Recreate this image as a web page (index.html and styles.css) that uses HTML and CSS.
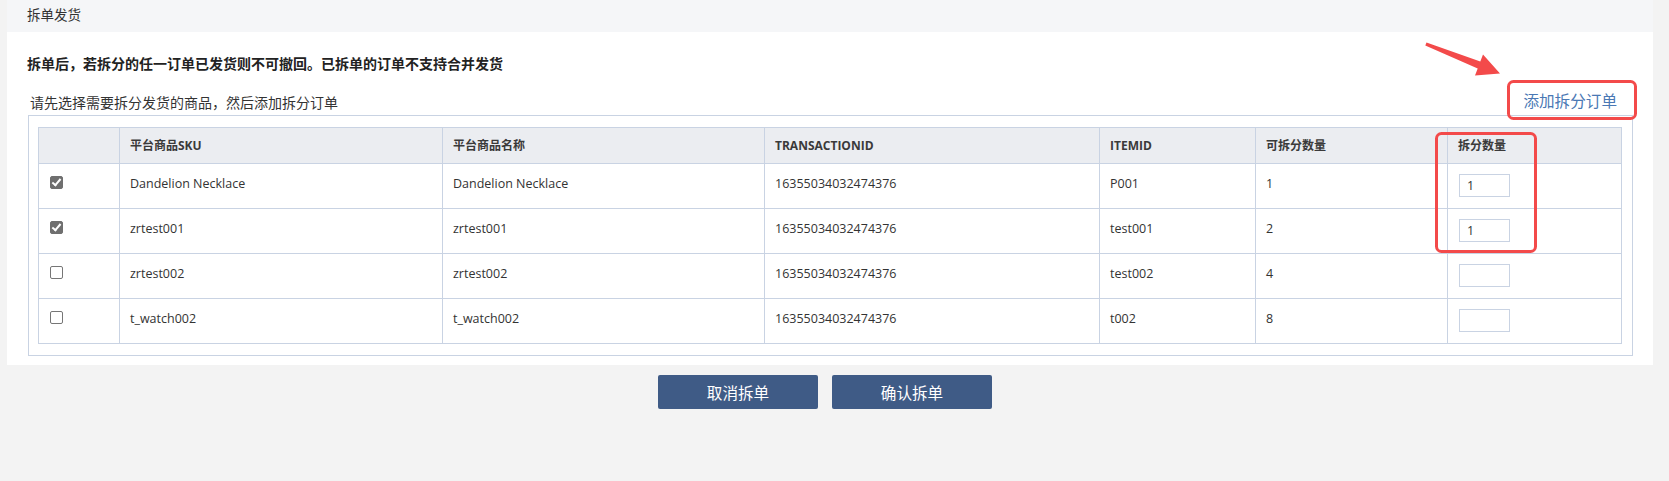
FILE: index.html
```html
<!DOCTYPE html>
<html lang="zh-CN">
<head>
  <meta charset="UTF-8" />
  <title>拆单发货</title>
  <link rel="stylesheet" href="styles.css">
</head>
<body>

  <div class="panel">
    <div class="panel-head">拆单发货</div>
    <div class="panel-body">
      <p class="notice">拆单后，若拆分的任一订单已发货则不可撤回。已拆单的订单不支持合并发货</p>

      <div class="select-row">
        <span class="select-tip">请先选择需要拆分发货的商品，然后添加拆分订单</span>
        <a class="add-link" href="#">添加拆分订单</a>
      </div>

      <div class="goods-box">
        <table class="goods-table">
          <colgroup>
            <col style="width:81px">
            <col style="width:323px">
            <col style="width:322px">
            <col style="width:335px">
            <col style="width:156px">
            <col style="width:192px">
            <col style="width:174px">
          </colgroup>
          <thead>
            <tr>
              <th></th>
              <th>平台商品SKU</th>
              <th>平台商品名称</th>
              <th>TRANSACTIONID</th>
              <th>ITEMID</th>
              <th>可拆分数量</th>
              <th>拆分数量</th>
            </tr>
          </thead>
          <tbody>
            <tr>
              <td><input type="checkbox" class="chk" checked></td>
              <td>Dandelion Necklace</td>
              <td>Dandelion Necklace</td>
              <td>16355034032474376</td>
              <td>P001</td>
              <td>1</td>
              <td><input type="text" class="qty" value="1"></td>
            </tr>
            <tr>
              <td><input type="checkbox" class="chk" checked></td>
              <td>zrtest001</td>
              <td>zrtest001</td>
              <td>16355034032474376</td>
              <td>test001</td>
              <td>2</td>
              <td><input type="text" class="qty" value="1"></td>
            </tr>
            <tr>
              <td><input type="checkbox" class="chk"></td>
              <td>zrtest002</td>
              <td>zrtest002</td>
              <td>16355034032474376</td>
              <td>test002</td>
              <td>4</td>
              <td><input type="text" class="qty"></td>
            </tr>
            <tr>
              <td><input type="checkbox" class="chk"></td>
              <td>t_watch002</td>
              <td>t_watch002</td>
              <td>16355034032474376</td>
              <td>t002</td>
              <td>8</td>
              <td><input type="text" class="qty"></td>
            </tr>
          </tbody>
        </table>
      </div>
    </div>
  </div>

  <div class="actions">
    <button class="btn">取消拆单</button>
    <button class="btn">确认拆单</button>
  </div>

  <!-- red annotation marks drawn over the screenshot -->
  <svg class="marks" width="1669" height="481" viewBox="0 0 1669 481">
    <polygon fill="#f34a4a" points="1426.5,42.4 1480.3,61.5 1483,54.6 1500,73.5 1475,75.4 1477.7,68.5 1425.3,45.6" />
    <rect x="1508.5" y="81.5" width="127" height="37" rx="5" fill="none" stroke="#f34a4a" stroke-width="3" />
    <rect x="1436.5" y="133.5" width="99" height="118" rx="5" fill="none" stroke="#f34a4a" stroke-width="3" />
  </svg>

</body>
</html>
```

FILE: styles.css
```css
body {
  margin: 0;
  background-color: #f3f3f3;
  font-family: "Open Sans", "Noto Sans CJK SC", sans-serif;
  color: #333;
}

.panel {
  margin: 0 16px 0 7px;
}

.panel-head {
  height: 32px;
  line-height: 30px;
  padding-left: 20px;
  background-color: #f5f6f8;
  font-size: 13.5px;
}

.panel-body {
  background: #fff;
  padding: 22px 0 9px;
}

.notice {
  margin: 0;
  padding-left: 20px;
  font-size: 14px;
  font-weight: bold;
  line-height: 20px;
  color: #222;
}

.select-row {
  display: flex;
  justify-content: space-between;
  align-items: center;
  height: 24px;
  margin-top: 14px;
  padding: 0 36px 0 23px;
}

.select-tip {
  font-size: 14px;
  padding-top: 4px;
}

.add-link {
  font-size: 15.6px;
  color: #4a78b4;
  text-decoration: none;
}

.goods-box {
  margin: 3px 20px 0 21px;
  border: 1px solid #c9d3e3;
  padding: 11px 11px 11px 9px;
}

.goods-table {
  width: 1583px;
  table-layout: fixed;
  border-collapse: collapse;
  font-size: 12.5px;
}

.goods-table th,
.goods-table td {
  border: 1px solid #c9d3e3;
  text-align: left;
  vertical-align: top;
  padding: 11px 10px 11px;
  line-height: 18px;
}

.goods-table th {
  background-color: #ebedf1;
  color: #3a3a3a;
  font-size: 12px;
  font-weight: bold;
  padding: 9px 10px 8px;
}

.chk {
  appearance: none;
  width: 13px;
  height: 13px;
  margin: 1px 0 0 1px;
  border: 1px solid #767676;
  border-radius: 2px;
  background: #fff;
  display: block;
  position: relative;
}

.chk:checked {
  background-color: #6f6f6f;
  border-color: #6f6f6f;
}

.chk:checked::after {
  content: "";
  position: absolute;
  left: 3px;
  top: 0px;
  width: 3px;
  height: 7px;
  border: solid #fff;
  border-width: 0 2px 2px 0;
  transform: rotate(40deg);
}

.qty {
  display: block;
  box-sizing: border-box;
  width: 51px;
  height: 23px;
  margin: -1px 0 0 1px;
  border: 1px solid #c9d3e3;
  padding: 0 7px;
  font-family: "Open Sans", sans-serif;
  font-size: 12.5px;
  color: #333;
  outline: none;
}

.actions {
  display: flex;
  justify-content: center;
  gap: 14px;
  padding: 10px 19px 0 0;
}

.btn {
  width: 160px;
  height: 34px;
  border: none;
  border-radius: 2px;
  background-color: #3f5b86;
  color: #fff;
  font-family: "Noto Sans CJK SC", sans-serif;
  font-size: 15.6px;
  cursor: pointer;
}

.marks {
  position: absolute;
  left: 0;
  top: 0;
  pointer-events: none;
}
```
